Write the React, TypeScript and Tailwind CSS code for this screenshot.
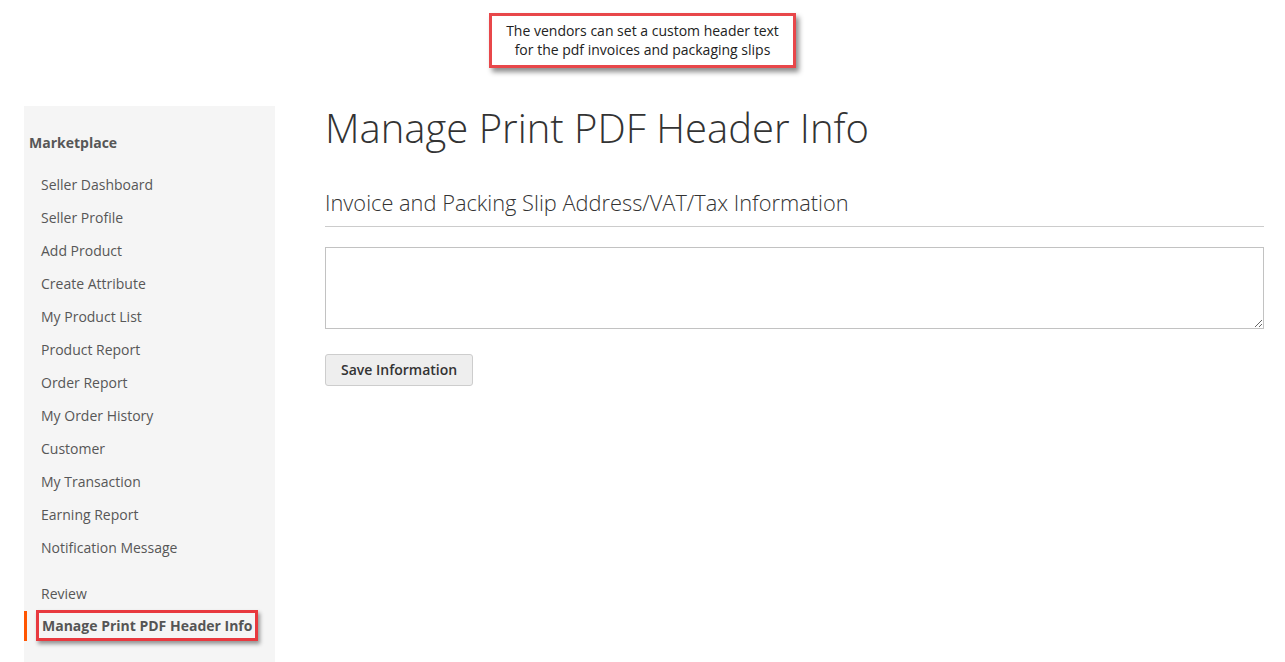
import React from "react";

const menuItems = [
  "Seller Dashboard",
  "Seller Profile",
  "Add Product",
  "Create Attribute",
  "My Product List",
  "Product Report",
  "Order Report",
  "My Order History",
  "Customer",
  "My Transaction",
  "Earning Report",
  "Notification Message",
];

const App: React.FC = () => {
  return (
    <div
      className="w-[1285px] h-[662px] overflow-hidden bg-white text-[#333]"
      style={{ fontFamily: '"Open Sans", "Liberation Sans", sans-serif' }}
    >
      {/* annotation callout */}
      <div className="h-[106px] flex justify-center pt-[13px]">
        <div className="w-[307px] h-[55px] border-[3px] border-[#e8474a] bg-white shadow-[3px_4px_5px_rgba(0,0,0,0.45)] flex flex-col items-center justify-center text-[14px] leading-[19px] text-[#222] pb-[2px]">
          <span>The vendors can set a custom header text</span>
          <span>for the pdf invoices and packaging slips</span>
        </div>
      </div>

      <div className="flex pl-[24px] pr-[21px]">
        {/* sidebar */}
        <aside className="w-[251px] h-[556px] bg-[#f5f5f5] pt-[25px] shrink-0">
          <div className="pl-[5px] text-[14px] leading-[24px] font-bold text-[#575757] mb-[13px]">
            Marketplace
          </div>
          <ul>
            {menuItems.map((item) => (
              <li
                key={item}
                className="h-[33px] flex items-center pl-[17px] text-[14px] text-[#575757]"
              >
                {item}
              </li>
            ))}
            <li className="mt-[13px] h-[33px] flex items-center pl-[17px] text-[14px] text-[#575757]">
              Review
            </li>
            <li className="-mt-[1px] h-[33px] flex items-center">
              <span className="w-[3px] h-[30px] bg-[#ff5501] mr-[9px]" />
              <span className="border-[3px] border-[#e8393f] shadow-[2px_3px_4px_rgba(0,0,0,0.4)] h-[31px] px-[3px] flex items-center text-[14px] font-bold text-[#555] whitespace-nowrap">
                Manage Print PDF Header Info
              </span>
            </li>
          </ul>
        </aside>

        {/* main */}
        <main className="flex-1 ml-[50px]">
          <h1 className="text-[40px] leading-[44px] font-light text-[#333]">
            Manage Print PDF Header Info
          </h1>
          <div className="mt-[39px] pb-[9px] border-b border-[#cccccc]">
            <h2 className="text-[21.8px] leading-[28px] font-light text-[#333]">
              Invoice and Packing Slip Address/VAT/Tax Information
            </h2>
          </div>
          <textarea className="mt-[20px] block w-full h-[82px] border border-[#c2c2c2] bg-white" />
          <button
            type="button"
            className="mt-[25px] h-[32px] px-[15px] pb-[2px] bg-[#eeeeee] border border-[#cdcdcd] rounded-[3px] text-[14px] font-semibold text-[#333]"
          >
            Save Information
          </button>
        </main>
      </div>
    </div>
  );
};

export default App;
